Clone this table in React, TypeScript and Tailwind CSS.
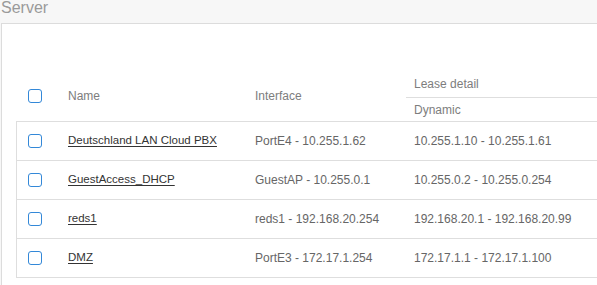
import React from "react";

const rows = [
  { name: "Deutschland LAN Cloud PBX", iface: "PortE4 - 10.255.1.62", lease: "10.255.1.10 - 10.255.1.61" },
  { name: "GuestAccess_DHCP", iface: "GuestAP - 10.255.0.1", lease: "10.255.0.2 - 10.255.0.254" },
  { name: "reds1", iface: "reds1 - 192.168.20.254", lease: "192.168.20.1 - 192.168.20.99" },
  { name: "DMZ", iface: "PortE3 - 172.17.1.254", lease: "172.17.1.1 - 172.17.1.100" },
];

function Box() {
  return <div className="h-[14px] w-[14px] rounded-[3px] border-[1.5px] border-[#3388d8] bg-white" />;
}

export default function App() {
  return (
    <div className="min-h-screen bg-[#f7f7f7] font-['Liberation_Sans',Arial,sans-serif] overflow-hidden">
      <div className="h-[23px] pl-[1px] text-[16px] leading-[16px] text-[#9a9a9a]">Server</div>
      <div className="ml-[1px] border-l border-t border-[#dcdcdc] bg-white pl-[14px] pt-[47px] pb-[8px]">
        <div className="w-[620px] text-[12px]">
          <div className="grid grid-cols-[44px_187px_159px_1fr] border-b border-[#dedede]">
            <div className="row-span-2 flex items-center pl-[12px]">
              <Box />
            </div>
            <div className="row-span-2 flex items-center pl-[8px] text-[#7d7d7d]">Name</div>
            <div className="row-span-2 flex items-center pl-[8px] text-[#7d7d7d]">Interface</div>
            <div className="flex h-[27px] items-center border-b border-[#dedede] pl-[8px] text-[#7d7d7d]">Lease detail</div>
            <div className="flex h-[23px] items-center pl-[8px] text-[#7d7d7d]">Dynamic</div>
          </div>
          {rows.map((r) => (
            <div
              key={r.name}
              className="grid h-[39px] grid-cols-[44px_187px_159px_1fr] items-center border-b border-l border-[#dedede]"
            >
              <div className="pl-[11px]">
                <Box />
              </div>
              <div className="pl-[7px] text-[11.5px] text-[#333] underline underline-offset-2">{r.name}</div>
              <div className="pl-[7px] text-[#666]">{r.iface}</div>
              <div className="pl-[7px] text-[#666]">{r.lease}</div>
            </div>
          ))}
        </div>
      </div>
    </div>
  );
}
